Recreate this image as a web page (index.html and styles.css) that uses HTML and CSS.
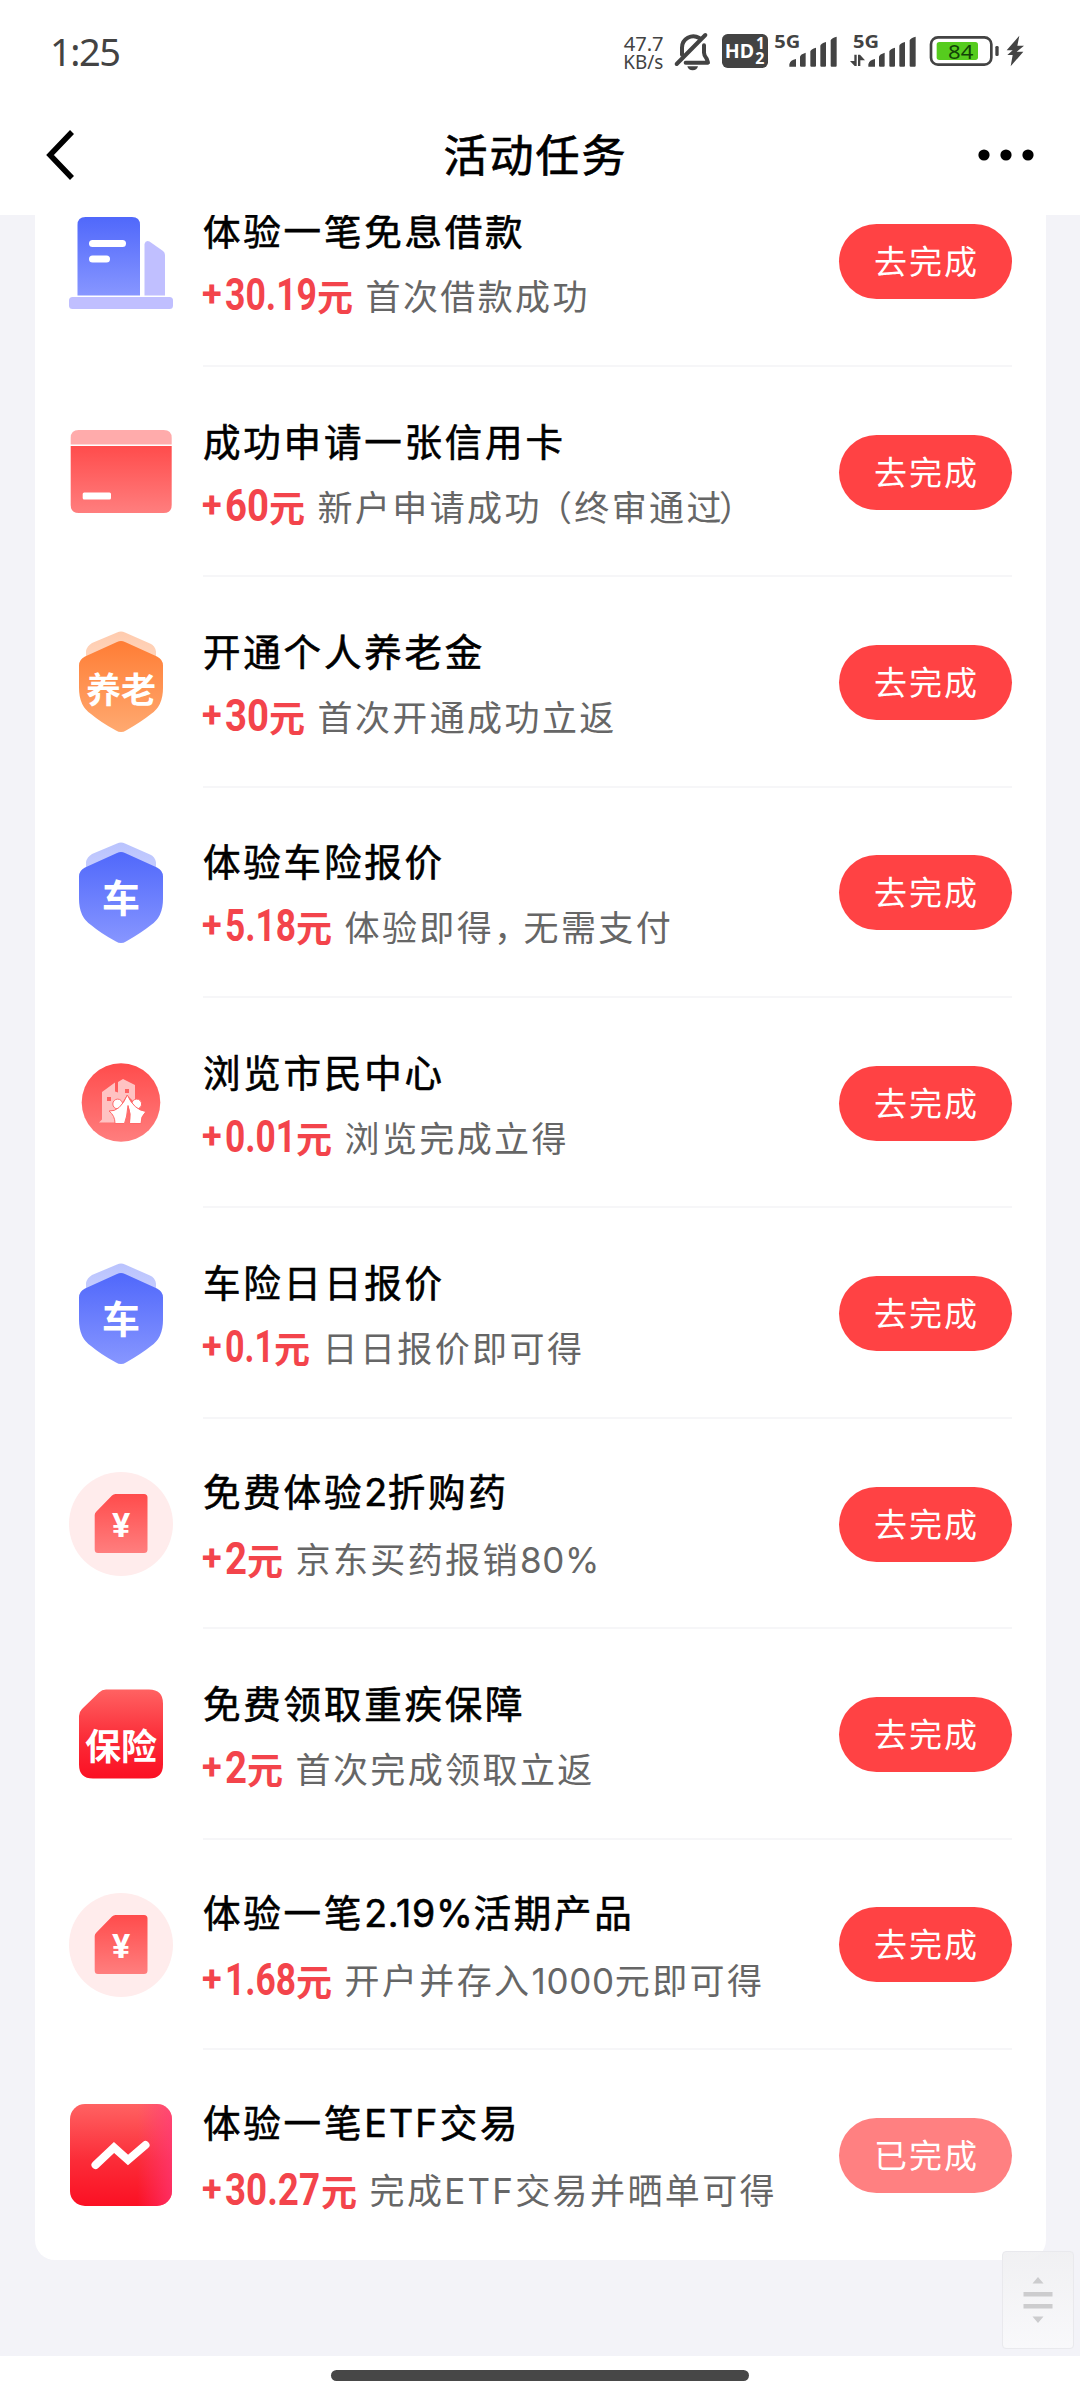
FILE: index.html
```html
<!DOCTYPE html>
<html lang="zh-CN">
<head>
<meta charset="utf-8">
<title>活动任务</title>
<link rel="stylesheet" href="styles.css">
</head>
<body>
<svg class="defs" width="0" height="0">
  <defs>
    <linearGradient id="blue" x1="0" y1="0" x2="0" y2="1"><stop offset="0" stop-color="#5068fb"/><stop offset="1" stop-color="#8796ff"/></linearGradient>
    <linearGradient id="red" x1="0" y1="0" x2="0" y2="1"><stop offset="0" stop-color="#ff4c4c"/><stop offset="1" stop-color="#ff7e7e"/></linearGradient>
    <linearGradient id="orange" x1="0" y1="0" x2="0" y2="1"><stop offset="0" stop-color="#ff7d35"/><stop offset="1" stop-color="#ffa970"/></linearGradient>
    <linearGradient id="crimson" x1="0" y1="0" x2="0" y2="1"><stop offset="0" stop-color="#ff6262"/><stop offset=".55" stop-color="#fb2c38"/><stop offset="1" stop-color="#fb1023"/></linearGradient>
    <linearGradient id="pink" x1="0" y1="0" x2="1" y2="0"><stop offset=".66" stop-color="#ff3a80" stop-opacity="0"/><stop offset="1" stop-color="#ff3a80" stop-opacity=".65"/></linearGradient>
    <symbol id="shield" viewBox="0 0 104 104">
      <path d="M48 2.5q4-2 8 0l25 11q5 2 6 8v30H17V21q1-5 6-8z" opacity=".4"/>
      <path d="M48 12q4-2 8 0l32 14.500q6 3 6 9V58q0 18-12 26-10 8-25 16.500-5 3-10 0-15-8-25-16.500Q10 76 10 58V35.500q0-6 6-9z"/>
    </symbol>
    <symbol id="coupon" viewBox="0 0 104 104">
      <circle cx="52" cy="52" r="52" fill="#ffecec"/>
      <path d="M46.500 22H75q3.500 0 3.500 3.500v52q0 3.500-3.500 3.500H29q-3.300 0-3.300-3.500V43q0-2 1.500-3.300L43 23.500q1.500-1.500 3.500-1.500z" fill="url(#red)"/>
    </symbol>
  </defs>
</svg>

<div class="screen">
  <div class="status">
    <span class="clock">1:25</span>
    <svg class="indicators" width="450" height="60" viewBox="0 0 1350 180" fill="#434343">
      <text x="71" y="93" font-size="61" textLength="120" lengthAdjust="spacingAndGlyphs">47.7</text>
      <text x="70" y="147" font-size="57" textLength="120" lengthAdjust="spacingAndGlyphs">KB/s</text>
      <g fill="none" stroke="#434343" stroke-width="12" stroke-linejoin="round" stroke-linecap="round">
        <path d="M246 104V83a34 34 0 0 1 52-29M312 76v22q0 8 8 18l4 12H257"/>
        <path d="M316 45L230 132"/>
      </g>
      <path d="M262 139h32q-3 12-16 12t-16-12z"/>
      <rect x="366" y="42" width="138" height="102" rx="17"/>
      <g fill="#fff" font-weight="700">
        <text x="374" y="115" font-size="60" textLength="88" lengthAdjust="spacingAndGlyphs">HD</text>
        <text x="468" y="88" font-size="46">1</text>
        <text x="466" y="131" font-size="48">2</text>
      </g>
      <g font-weight="700" font-size="53">
        <text x="523" y="84" textLength="78" lengthAdjust="spacingAndGlyphs">5G</text>
        <text x="759" y="84" textLength="78" lengthAdjust="spacingAndGlyphs">5G</text>
      </g>
      <g id="bars">
        <path d="M568 140v-7q3-13 20-16v23zM600 137v-27q1-7 17-12v39q0 3-3 3h-11q-3 0-3-3zM631 137V94q1-6 17-11v54q0 3-3 3h-11q-3 0-3-3zM661 137V77q1-6 17-11v71q0 3-3 3h-11q-3 0-3-3zM692 137V61q1-6 18-11v87q0 3-3 3h-12q-3 0-3-3z"/>
      </g>
      <use href="#bars" x="237"/>
      <path d="M763 104h7v34h-6l-14-15h13zM774 138v-34h6l15 17h-14v17z"/>
      <rect x="993" y="52" width="181" height="82" rx="21" fill="none" stroke="#434343" stroke-width="8"/>
      <rect x="1010" y="66" width="124" height="54" rx="8" fill="#56cc1e"/>
      <rect x="1186" y="78" width="10" height="30" rx="4"/>
      <text x="1044" y="117" font-size="61" fill="#124307" textLength="76" lengthAdjust="spacingAndGlyphs">84</text>
      <path d="M1258 47l-38 44h18l-16 14h16l-6 34 38-44h-20l22-18h-20z"/>
    </svg>
  </div>

  <header class="nav">
    <svg width="30" height="56" viewBox="0 0 30 56" fill="none" stroke="#000" stroke-width="5.500"><path d="M26 5L4 28l22 23"/></svg>
    <h1>活动任务</h1>
    <svg width="56" height="12" viewBox="0 0 56 12"><circle cx="6" cy="6" r="5.600"/><circle cx="28" cy="6" r="5.600"/><circle cx="50" cy="6" r="5.600"/></svg>
  </header>

  <main class="page">
    <ul class="card">
      <li class="task">
        <svg class="icon" viewBox="0 0 104 104">
          <path d="M16.500 7H63q8 0 8 8v70.500H8.500V15q0-8 8-8z" fill="url(#blue)"/>
          <rect x="20" y="30" width="37" height="7" rx="3.500" fill="#fff"/><rect x="20" y="45.500" width="21" height="7" rx="3.500" fill="#fff"/>
          <path d="M75.500 85.500V34q1-4 5-2.500L94 41q2 1.500 2 4v40.500z" fill="#c0bfff"/>
          <rect y="87" width="104" height="12" rx="3.500" fill="#c0bfff"/>
        </svg>
        <div class="info">
          <h2>体验一笔免息借款</h2>
          <p><svg class="sum" width="114" height="52"><text class="plus" x="-1" y="37">+</text><text x="22" y="40.500" textLength="92" lengthAdjust="spacingAndGlyphs">30.19</text></svg><b>元</b><span>首次借款成功</span></p>
        </div>
        <button>去完成</button>
      </li>
      <li class="task">
        <svg class="icon" viewBox="0 0 104 104">
          <path d="M1.700 24.500V18q0-8 8-8h85q8 0 8 8v6.500z" fill="#ffabab"/>
          <path d="M1.700 26h101v59q0 8-8 8h-85q-8 0-8-8z" fill="url(#red)"/>
          <rect x="13.700" y="72.500" width="28.300" height="7" rx="1.500" fill="#fff"/>
        </svg>
        <div class="info">
          <h2>成功申请一张信用卡</h2>
          <p><svg class="sum" width="66" height="52"><text class="plus" x="-1" y="37">+</text><text x="22" y="40.500" textLength="44" lengthAdjust="spacingAndGlyphs">60</text></svg><b>元</b><span>新户申请成功<i class="open">（</i>终审通过<i class="close">）</i></span></p>
        </div>
        <button>去完成</button>
      </li>
      <li class="task">
        <svg class="icon" viewBox="0 0 104 104"><use href="#shield" fill="url(#orange)"/><text x="52" y="73" font-size="35">养老</text></svg>
        <div class="info">
          <h2>开通个人养老金</h2>
          <p><svg class="sum" width="66" height="52"><text class="plus" x="-1" y="37">+</text><text x="22" y="40.500" textLength="44" lengthAdjust="spacingAndGlyphs">30</text></svg><b>元</b><span>首次开通成功立返</span></p>
        </div>
        <button>去完成</button>
      </li>
      <li class="task">
        <svg class="icon" viewBox="0 0 104 104"><use href="#shield" fill="url(#blue)"/><text x="52" y="71" font-size="38">车</text></svg>
        <div class="info">
          <h2>体验车险报价</h2>
          <p><svg class="sum" width="93" height="52"><text class="plus" x="-1" y="37">+</text><text x="22" y="40.500" textLength="71" lengthAdjust="spacingAndGlyphs">5.18</text></svg><b>元</b><span>体验即得<i class="comma">，</i>无需支付</span></p>
        </div>
        <button>去完成</button>
      </li>
      <li class="task">
        <svg class="icon" viewBox="0 0 104 104">
          <circle cx="52" cy="51.500" r="39.300" fill="url(#red)"/>
          <path d="M30 71.500l3-3V41l13-9.500v9l3 1V31l5-3 12 6v18L58 44 46 64v7.500z" fill="#ffc2c2"/>
          <path d="M38 46h4v4h-4zM56 38h4v4h-4z" fill="#ff6161"/>
          <g fill="#fff" stroke="#ff6868" stroke-width="1"><circle cx="48.700" cy="53" r="4.900"/><circle cx="67.700" cy="53" r="4.900"/>
          <path d="M40 60q11 1 18.300-16Q65 59 77 60.500q-5.500 5-5 12H60.500q2-10-1.500-18-1 12-3.500 18H46q0-8-6-12.500z"/></g>
        </svg>
        <div class="info">
          <h2>浏览市民中心</h2>
          <p><svg class="sum" width="93" height="52"><text class="plus" x="-1" y="37">+</text><text x="22" y="40.500" textLength="71" lengthAdjust="spacingAndGlyphs">0.01</text></svg><b>元</b><span>浏览完成立得</span></p>
        </div>
        <button>去完成</button>
      </li>
      <li class="task">
        <svg class="icon" viewBox="0 0 104 104"><use href="#shield" fill="url(#blue)"/><text x="52" y="71" font-size="38">车</text></svg>
        <div class="info">
          <h2>车险日日报价</h2>
          <p><svg class="sum" width="71" height="52"><text class="plus" x="-1" y="37">+</text><text x="22" y="40.500" textLength="49" lengthAdjust="spacingAndGlyphs">0.1</text></svg><b>元</b><span>日日报价即可得</span></p>
        </div>
        <button>去完成</button>
      </li>
      <li class="task">
        <svg class="icon" viewBox="0 0 104 104"><use href="#coupon"/><text class="yen" x="52" y="64.500" font-size="34">¥</text></svg>
        <div class="info">
          <h2>免费体验<em>2</em>折购药</h2>
          <p><svg class="sum" width="44" height="52"><text class="plus" x="-1" y="37">+</text><text x="22" y="40.500" textLength="22" lengthAdjust="spacingAndGlyphs">2</text></svg><b>元</b><span>京东买药报销<em>80%</em></span></p>
        </div>
        <button>去完成</button>
      </li>
      <li class="task">
        <svg class="icon" viewBox="0 0 104 104"><path d="M37 7.500H80q14 0 14 14v61q0 14-14 14H24q-14 0-14-14V34q0-4 3-7L30 10.500q3-3 7-3z" fill="url(#crimson)"/><text x="52" y="78" font-size="36">保险</text></svg>
        <div class="info">
          <h2>免费领取重疾保障</h2>
          <p><svg class="sum" width="44" height="52"><text class="plus" x="-1" y="37">+</text><text x="22" y="40.500" textLength="22" lengthAdjust="spacingAndGlyphs">2</text></svg><b>元</b><span>首次完成领取立返</span></p>
        </div>
        <button>去完成</button>
      </li>
      <li class="task">
        <svg class="icon" viewBox="0 0 104 104"><use href="#coupon"/><text class="yen" x="52" y="64.500" font-size="34">¥</text></svg>
        <div class="info">
          <h2>体验一笔<em>2.19%</em>活期产品</h2>
          <p><svg class="sum" width="93" height="52"><text class="plus" x="-1" y="37">+</text><text x="22" y="40.500" textLength="71" lengthAdjust="spacingAndGlyphs">1.68</text></svg><b>元</b><span>开户并存入<em>1000</em>元即可得</span></p>
        </div>
        <button>去完成</button>
      </li>
      <li class="task">
        <svg class="icon" viewBox="0 0 104 104">
          <rect x="1" y="1" width="102" height="102" rx="15" fill="url(#crimson)"/><rect x="1" y="1" width="102" height="102" rx="15" fill="url(#pink)"/>
          <path d="M26.500 62L45 44.500 59 57 76.500 42" fill="none" stroke="#fff" stroke-width="8" stroke-linecap="round" stroke-linejoin="miter"/>
        </svg>
        <div class="info">
          <h2>体验一笔<em class="caps">ETF</em>交易</h2>
          <p><svg class="sum" width="118" height="52"><text class="plus" x="-1" y="37">+</text><text x="22" y="40.500" textLength="95" lengthAdjust="spacingAndGlyphs">30.27</text></svg><b>元</b><span>完成<em class="caps">ETF</em>交易并晒单可得</span></p>
        </div>
        <button class="done">已完成</button>
      </li>
    </ul>
    <div class="scroller">
      <svg width="30" height="50" viewBox="0 0 30 50" fill="#ccccce"><path d="M9.500 8.500L15 2l5.500 6.500zM9.500 41.500L15 48l5.500-6.500zM.5 17h29v4.500H.5zM.5 29h29v4.500H.5z"/></svg>
    </div>
  </main>

  <footer class="homebar"><span></span></footer>
</div>
</body>
</html>
```
FILE: styles.css
```css
* { box-sizing: border-box; }

body {
  margin: 0;
  background: #fff;
  color: #000;
  font-family: "Noto Sans CJK SC", sans-serif;
}

.defs { position: absolute; }

.screen {
  width: 1080px;
  height: 2400px;
  display: flex;
  flex-direction: column;
  overflow: hidden;
}

.status {
  height: 104px;
  padding: 20px 30px 0 50px;
  display: flex;
  justify-content: space-between;
  align-items: flex-start;
}

.clock {
  font: 38px/63px "Noto Sans", sans-serif;
  letter-spacing: -1.5px;
  color: #434343;
}

.indicators { font-family: "Noto Sans", sans-serif; }

.nav {
  height: 111px;
  padding: 0 46px 10px;
  display: grid;
  grid-template-columns: 1fr auto 1fr;
  align-items: center;
}

.nav svg:last-child { justify-self: end; }

.nav h1 {
  margin: -2px 0 2px;
  padding-right: 9px;
  font-size: 44px;
  line-height: 60px;
  font-weight: 400;
  letter-spacing: 2px;
  -webkit-text-stroke: 0.7px #000;
}

.page {
  position: relative;
  height: 2141px;
  padding: 0 34px 0 35px;
  background: #f3f3f8;
  overflow: hidden;
}

.card {
  margin: -58.5px 0 0;
  padding: 0 34px;
  list-style: none;
  background: #fff;
  border-radius: 0 0 20px 20px;
}

.task {
  height: 210.4px;
  display: flex;
  align-items: center;
  background: linear-gradient(#f6f6f8, #f6f6f8) no-repeat right bottom / 809px 2px;
}

.task:last-child { background: none; }

.icon {
  width: 104px;
  height: 104px;
  flex: none;
}

.icon text {
  font-family: "Noto Sans CJK SC", sans-serif;
  font-weight: 700;
  fill: #fff;
  text-anchor: middle;
}

.icon .yen { font-family: Roboto, sans-serif; }

.info {
  flex: 1;
  margin-left: 30px;
  padding-top: 1px;
  display: flex;
  flex-direction: column;
  gap: 14px;
}

.info h2 {
  margin: 0;
  font-size: 37.5px;
  line-height: 52px;
  font-weight: 400;
  letter-spacing: 2.8px;
  white-space: nowrap;
  -webkit-text-stroke: 0.6px #000;
}

.info p {
  margin: 0;
  height: 52px;
  display: flex;
  align-items: center;
  font-size: 35px;
  line-height: 52px;
  white-space: nowrap;
}

.sum {
  flex: none;
  overflow: visible;
  fill: #f3444b;
  font: 700 44px Roboto, sans-serif;
}

.sum .plus { font-size: 36px; }

.info b {
  width: 48.5px;
  color: #f3444b;
  font-size: 36px;
  font-weight: 700;
}

.info p span {
  color: #666;
  letter-spacing: 2.4px;
}

.info em {
  font-family: Inter, sans-serif;
  font-style: normal;
  letter-spacing: 0.7px;
}

.info .caps { letter-spacing: 2.2px; }

.info i { font-style: normal; }
.open { margin-left: -5px; }
.close { margin-left: -5px; }
.comma { margin-right: -8px; }

button {
  width: 173px;
  height: 75px;
  padding: 0 0 2px 2px;
  border: 0;
  border-radius: 38px;
  background: #ff4244;
  color: #fff;
  font: 33px/73px "Noto Sans CJK SC", sans-serif;
  letter-spacing: 2px;
}

.done { background: #ff8081; }

.scroller {
  position: absolute;
  right: 6px;
  bottom: 7px;
  width: 72px;
  height: 98px;
  display: flex;
  align-items: center;
  justify-content: center;
  border: 1px solid #e9e9ed;
  border-radius: 4px;
  background: linear-gradient(rgba(240, 240, 242, .9), rgba(249, 249, 251, .9));
}

.homebar {
  flex: 1;
  display: flex;
  justify-content: center;
  padding-top: 14px;
}

.homebar span {
  width: 418px;
  height: 11px;
  border-radius: 5.5px;
  background: #474747;
}
```
